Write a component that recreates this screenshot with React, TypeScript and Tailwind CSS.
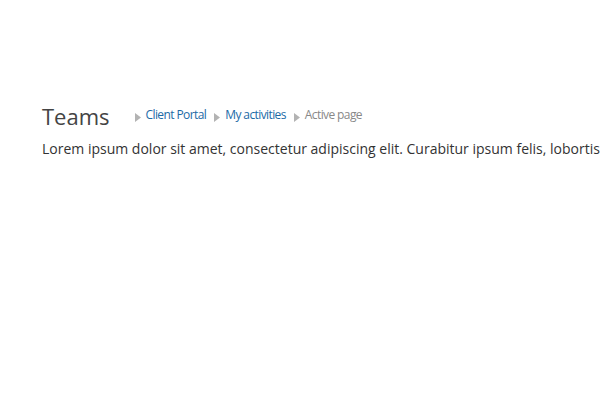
import React from "react";

const crumbs = [
  { label: "Client Portal", active: false },
  { label: "My activities", active: false },
  { label: "Active page", active: true },
];

function Arrow() {
  return (
    <svg width="6" height="9" viewBox="0 0 6 9" className="mt-[6px] mr-[5px] shrink-0">
      <polygon points="0,0 6,4.5 0,9" fill="#b3b3b3" />
    </svg>
  );
}

export default function App() {
  return (
    <div className="w-[600px] h-[400px] bg-white overflow-hidden font-['Open_Sans',sans-serif]">
      <div className="pt-[101px] pl-[42px]">
        <div className="flex items-start">
          <h1 className="text-[22px] leading-[30px] text-[#444] font-normal">Teams</h1>
          <nav className="flex items-start ml-[25px] mt-[6px] text-[12px] leading-[16px] tracking-[-0.6px]">
            {crumbs.map((c) => (
              <div key={c.label} className="flex items-start mr-[8px]">
                <Arrow />
                <span className={c.active ? "text-[#888]" : "text-[#1c6aa6]"}>{c.label}</span>
              </div>
            ))}
          </nav>
        </div>
        <p className="mt-[8px] text-[14px] leading-[20px] text-[#333] whitespace-nowrap">
          Lorem ipsum dolor sit amet, consectetur adipiscing elit. Curabitur ipsum felis, lobortis
          nec dolor vitae, posuere.
        </p>
      </div>
    </div>
  );
}
